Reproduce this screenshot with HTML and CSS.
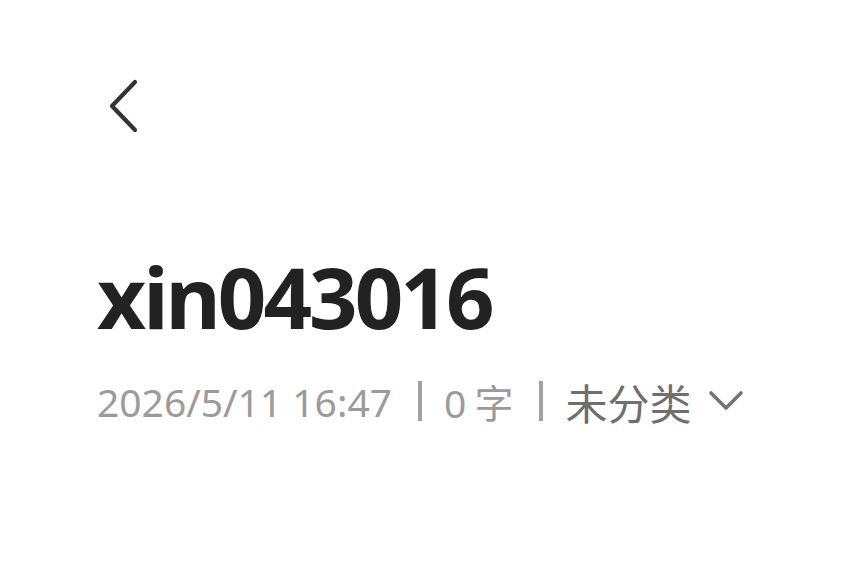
FILE: index.html
```html
<!DOCTYPE html>
<html lang="zh">
<head>
<meta charset="utf-8">
<link rel="stylesheet" href="styles.css">
</head>
<body>
<div class="page">
  <div class="topbar">
    <svg class="back" width="36" height="60" viewBox="0 0 36 60">
      <path d="M31 4 L8 28 L31 52" fill="none" stroke="#333" stroke-width="4.2" stroke-linecap="round" stroke-linejoin="round"/>
    </svg>
  </div>
  <h1 class="title">xin043016</h1>
  <div class="meta">
    <span class="date">2026/5/11 16:47</span>
    <span class="sep"></span>
    <span class="count">0 字</span>
    <span class="sep"></span>
    <span class="cat">未分类</span>
    <svg class="chev" width="38" height="26" viewBox="0 0 38 26">
      <path d="M4 5 L19 20 L34 5" fill="none" stroke="#747474" stroke-width="3.6" stroke-linecap="round" stroke-linejoin="round"/>
    </svg>
  </div>
</div>
</body>
</html>
```
FILE: styles.css
```css
html, body {
  margin: 0;
  padding: 0;
  background: #ffffff;
}
.page {
  padding: 78px 0 0 97px;
  font-family: "Noto Sans", "Noto Sans CJK SC", sans-serif;
}
.topbar {
  height: 60px;
  display: flex;
  align-items: flex-start;
}
.back {
  display: block;
  margin-left: 7px;
}
.title {
  margin: 108px 0 0 0;
  font-size: 85px;
  font-weight: 700;
  color: #222222;
  line-height: 100px;
  letter-spacing: -3px;
}
.meta {
  display: flex;
  align-items: center;
  margin-top: 30px;
  height: 50px;
  font-size: 39px;
  color: #9b9b9b;
}
.sep {
  width: 4px;
  height: 40px;
  background: #a2a2a2;
  margin: 0 22px 0 26px;
}
.count {
  word-spacing: -2px;
}
.cat {
  color: #6f6f6f;
  font-size: 42px;
}
.chev {
  margin-left: 16px;
}
```
